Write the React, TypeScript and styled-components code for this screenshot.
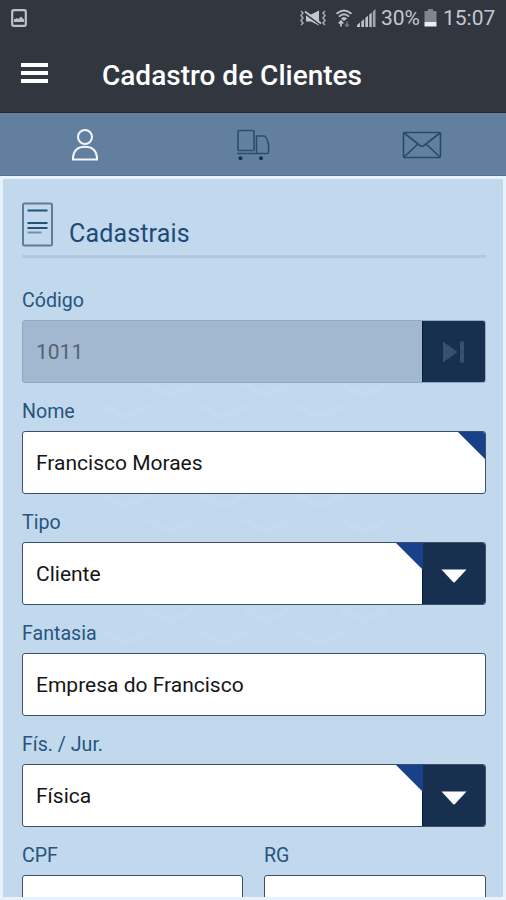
import React from "react";
import styled, { createGlobalStyle, css } from "styled-components";

const GlobalStyle = createGlobalStyle`
  * { box-sizing: border-box; }
  body { margin: 0; background: #e6f2fd; font-family: Roboto, "Liberation Sans", sans-serif; }
`;

const Screen = styled.div`
  width: 506px;
  height: 900px;
  display: flex;
  flex-direction: column;
  overflow: hidden;
  background: #e6f2fd;
`;

const StatusBar = styled.div`
  height: 36px;
  flex: none;
  display: flex;
  align-items: center;
  justify-content: space-between;
  padding: 0 10px 0 10px;
  background: #31363f;
  color: #c3c8d0;
  font-size: 21px;
`;

const StatusGroup = styled.div`
  display: flex;
  align-items: center;
`;

const StatusText = styled.span<{ $width: number; $gap?: number }>`
  width: ${(p) => p.$width}px;
  margin-left: ${(p) => p.$gap ?? 0}px;
  white-space: nowrap;
`;

const StatusIcon = styled.svg<{ $gap?: number }>`
  display: block;
  margin-left: ${(p) => p.$gap ?? 0}px;
`;

const AppBar = styled.header`
  height: 77px;
  flex: none;
  display: flex;
  align-items: center;
  padding: 3px 0 0 21px;
  background: #31363f;
  border-bottom: 1px solid #252932;
`;

const MenuButton = styled.button`
  width: 27px;
  height: 20px;
  padding: 0;
  border: 0;
  background: none;
  display: flex;
  flex-direction: column;
  justify-content: space-between;
  margin-bottom: 5px;
`;

const MenuLine = styled.span`
  height: 4px;
  background: #fff;
`;

const Title = styled.h1`
  margin: 1px 0 0 54px;
  font-size: 28px;
  line-height: 32px;
  font-weight: 500;
  color: #fff;
`;

const Tabs = styled.nav`
  height: 63px;
  flex: none;
  display: grid;
  grid-template-columns: repeat(3, 1fr);
  background: #627f9f;
  border-bottom: 1px solid #566f90;
`;

const Tab = styled.div`
  display: flex;
  justify-content: center;
  align-items: center;
  padding: 1px 0 0 1px;
`;

const Panel = styled.main`
  position: relative;
  flex: none;
  width: 500px;
  height: 718px;
  margin: 3px 0 0 3px;
  padding: 0 17px 0 19px;
  overflow: hidden;
  background: #c2d9ed;
`;

const Watermark = styled.svg`
  position: absolute;
  inset: 0;
`;

const Content = styled.div`
  position: relative;
`;

const SectionHeader = styled.div`
  height: 79px;
  display: flex;
  align-items: flex-start;
  padding-top: 23px;
  border-bottom: 3px solid #b2c8e2;
`;

const SectionTitle = styled.h2`
  margin: 16px 0 0 15px;
  font-size: 25px;
  line-height: 32px;
  font-weight: 400;
  color: #1d4b78;
  letter-spacing: 0.15px;
`;

const Fields = styled.div`
  padding-top: 14px;
  display: flex;
  flex-direction: column;
`;

const FieldRow = styled.div`
  display: grid;
  grid-template-columns: 221px 222px;
  column-gap: 21px;
`;

const Field = styled.div`
  height: 111px;
`;

const Label = styled.label`
  display: block;
  height: 48px;
  padding-top: 16px;
  font-size: 19.6px;
  line-height: 26px;
  color: #265580;
`;

const Control = styled.div<{ $disabled?: boolean }>`
  position: relative;
  height: 63px;
  display: flex;
  border: 1px solid #3c506b;
  border-radius: 3px;
  overflow: hidden;
  background: #fff;
  color: #151515;
  ${(p) =>
    p.$disabled &&
    css`
      background: #a2b7d0;
      border-color: #92a7c1;
      color: #566373;
    `}
`;

const Value = styled.div`
  position: relative;
  flex: 1;
  display: flex;
  align-items: center;
  padding: 1px 0 0 13px;
  font-size: 21px;
`;

const RequiredMark = styled.span`
  position: absolute;
  top: 0;
  right: 0;
  width: 27px;
  height: 27px;
  background: #184189;
  clip-path: polygon(0 0, 100% 0, 100% 100%);
`;

const ActionButton = styled.button`
  width: 64px;
  margin: -1px;
  padding: 0;
  flex: none;
  display: flex;
  align-items: center;
  justify-content: center;
  background: #173050;
  border: 1px solid #061a3e;
  border-radius: 0 2px 2px 0;
`;

function NextIcon() {
  return (
    <svg width="22" height="22" viewBox="0 0 22 22" fill="#3a4f6c">
      <path d="M0 0.5 L14.5 11 L0 21.5Z" />
      <rect x="17" y="0.5" width="4" height="21" />
    </svg>
  );
}

function CaretIcon() {
  return (
    <svg width="28" height="20" viewBox="0 0 28 20" fill="#fff">
      <path d="M1.5 5.5 H26.5 L15.2 17.8 Q14 19 12.8 17.8Z" />
    </svg>
  );
}

type FormFieldProps = {
  label: string;
  value?: string;
  disabled?: boolean;
  required?: boolean;
  action?: "next" | "select";
};

function FormField({ label, value, disabled, required, action }: FormFieldProps) {
  return (
    <Field>
      <Label>{label}</Label>
      <Control $disabled={disabled}>
        <Value>
          {value}
          {required && <RequiredMark />}
        </Value>
        {action && (
          <ActionButton disabled={disabled}>
            {action === "next" ? <NextIcon /> : <CaretIcon />}
          </ActionButton>
        )}
      </Control>
    </Field>
  );
}

const chevronRows = [
  { y: 218, x: 167 },
  { y: 240, x: 123 },
  { y: 329, x: 123 },
  { y: 354, x: 167 },
  { y: 443, x: 167 },
  { y: 466, x: 123 },
];

export default function App() {
  return (
    <>
      <GlobalStyle />
      <Screen>
        <StatusBar>
          <StatusIcon width="18" height="18" viewBox="0 0 18 18">
            <rect x="2.2" y="1.2" width="13.6" height="15.6" rx="1.5" fill="none" stroke="#bcc1ca" strokeWidth="2.2" />
            <path d="M4 13 V10.5 L7 9 L8.5 10 L11 7.5 L14 10.5 V13Z" fill="#bcc1ca" />
          </StatusIcon>
          <StatusGroup>
            <StatusIcon width="28" height="18" viewBox="0 0 28 18" fill="none" stroke="#a4a9b3" strokeWidth="1.5">
              <path d="M2 2 L4 4 L2 6.5 L4 9 L2 11.5 L4 14 L2 16" />
              <path d="M26 2 L24 4 L26 6.5 L24 9 L26 11.5 L24 14 L26 16" />
              <path d="M7 5.5 H12 L20 1.5 V16.5 L12 12.5 H7Z" fill="#c3c8d0" stroke="none" />
              <path d="M6 4.5 L21 15.5" stroke="#31363f" strokeWidth="1.8" />
              <path d="M6 2.5 L22 14.5" stroke="#c3c8d0" strokeWidth="1.8" />
            </StatusIcon>
            <StatusIcon $gap={8} width="18" height="18" viewBox="0 0 18 18" fill="none" stroke="#bcc1ca" strokeWidth="1.9">
              <path d="M1.5 4.8 Q9 -2 16.5 4.8 M4 7.6 Q9 3 14 7.6" />
              <path d="M5.8 9.5 Q9 6.5 12.2 9.5 L9 12Z" fill="#bcc1ca" stroke="none" />
              <path d="M6 12 V17.5 M3.8 14.5 L6 12 L8.2 14.5" strokeWidth="1.8" />
              <path d="M12 12.5 V17.5 M10 15.5 L12 17.5 L14 15.5" stroke="#747a84" strokeWidth="1.4" />
            </StatusIcon>
            <StatusIcon $gap={4} width="19" height="18" viewBox="0 0 19 18" fill="#bcc1ca">
              <path d="M0 18 V16 L3 13.5 V18Z M4.3 18 V12.5 L7 10.3 V18Z M8.3 18 V9 L11 6.7 V18Z M12.3 18 V5.5 L14.7 3.5 V18Z" />
              <path d="M15.8 18 V2.5 L18.5 0 V18Z" fill="#9fa5af" />
            </StatusIcon>
            <StatusText $gap={5} $width={40}>30%</StatusText>
            <StatusIcon $gap={3} width="13" height="18" viewBox="0 0 13 18">
              <path d="M4 0 H9 V2 H12.5 V13 H0.5 V2 H4Z" fill="#7f858d" />
              <rect x="0.5" y="13" width="12" height="4.5" fill="#eceef0" />
            </StatusIcon>
            <StatusText $gap={6} $width={53}>15:07</StatusText>
          </StatusGroup>
        </StatusBar>

        <AppBar>
          <MenuButton aria-label="Menu">
            <MenuLine />
            <MenuLine />
            <MenuLine />
          </MenuButton>
          <Title>Cadastro de Clientes</Title>
        </AppBar>

        <Tabs>
          <Tab>
            <svg width="28" height="34" viewBox="0 0 28 34" fill="none" stroke="#f2f5f9" strokeWidth="2">
              <circle cx="14" cy="9" r="7" />
              <path d="M2 31.5 V29 C3 22 8 18.8 14 18.8 S25 22 26 29 V31.5Z" />
            </svg>
          </Tab>
          <Tab>
            <svg width="34" height="32" viewBox="0 0 34 32" fill="none" stroke="#2d4b70" strokeWidth="1.6">
              <rect x="2" y="1.5" width="16" height="20" rx="1" />
              <path d="M1 24.5 H31 Q32.8 24.5 32.6 22 V16 Q30.5 7 28 7 H20.5 V24" />
              <circle cx="4.5" cy="29.3" r="2" fill="#13315a" stroke="none" />
              <circle cx="25" cy="29.3" r="2" fill="#13315a" stroke="none" />
            </svg>
          </Tab>
          <Tab>
            <svg width="40" height="28" viewBox="0 0 40 28" fill="none" stroke="#2a486d" strokeWidth="1.6">
              <rect x="1.5" y="1.5" width="37" height="25" rx="1" />
              <path d="M2 2 L18 14.5 Q20 16 22 14.5 L38 2 M2 26 L16 13 M38 26 L24 13" />
            </svg>
          </Tab>
        </Tabs>

        <Panel>
          <Watermark width="500" height="718" fill="none" stroke="#cbdff1" strokeWidth="5" opacity="0.32">
            {chevronRows.map((row) =>
              [0, 1, 2].map((col) => {
                const x = row.x + col * 97;
                return (
                  <path
                    key={`${row.y}-${col}`}
                    d={`M${x - 24} ${row.y - 13} L${x} ${row.y - 2} L${x + 24} ${row.y - 13}`}
                  />
                );
              })
            )}
          </Watermark>
          <Content>
            <SectionHeader>
              <svg width="32" height="45" viewBox="0 0 32 45" fill="none" strokeWidth="2">
                <rect x="1" y="1.5" width="29" height="42" rx="1.5" stroke="#627b99" />
                <path d="M5.5 8.5 H25.5 M5.5 21 H25.5 M5.5 26 H25.5" stroke="#205477" />
                <path d="M5.5 30.5 H19.5" stroke="#758fac" />
              </svg>
              <SectionTitle>Cadastrais</SectionTitle>
            </SectionHeader>
            <Fields>
              <FormField label="Código" value="1011" disabled action="next" />
              <FormField label="Nome" value="Francisco Moraes" required />
              <FormField label="Tipo" value="Cliente" required action="select" />
              <FormField label="Fantasia" value="Empresa do Francisco" />
              <FormField label="Fís. / Jur." value="Física" required action="select" />
              <FieldRow>
                <FormField label="CPF" />
                <FormField label="RG" />
              </FieldRow>
            </Fields>
          </Content>
        </Panel>
      </Screen>
    </>
  );
}
